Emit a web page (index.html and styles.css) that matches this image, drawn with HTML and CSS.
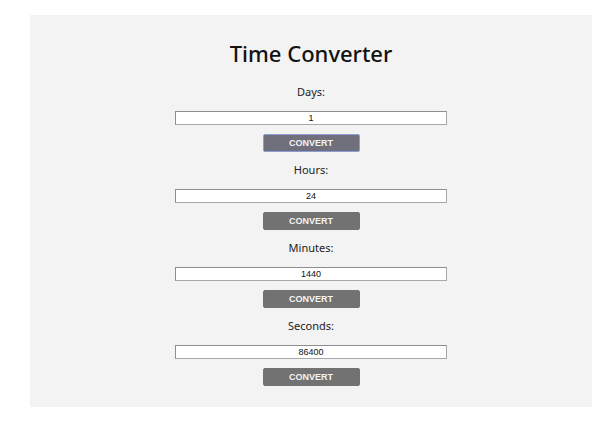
FILE: index.html
```html
<!DOCTYPE html>
<html>
<head>
<meta charset="utf-8">
<link rel="stylesheet" href="styles.css">
</head>
<body>
<main class="panel">
  <h1 class="title">Time Converter</h1>
  <section class="group">
    <label class="label">Days:</label>
    <input class="field" type="text" value="1">
    <button class="btn btn-focus">CONVERT</button>
  </section>
  <section class="group">
    <label class="label">Hours:</label>
    <input class="field" type="text" value="24">
    <button class="btn">CONVERT</button>
  </section>
  <section class="group">
    <label class="label">Minutes:</label>
    <input class="field" type="text" value="1440">
    <button class="btn">CONVERT</button>
  </section>
  <section class="group">
    <label class="label">Seconds:</label>
    <input class="field" type="text" value="86400">
    <button class="btn">CONVERT</button>
  </section>
</main>
</body>
</html>
```
FILE: styles.css
```css
html, body {
  margin: 0;
  padding: 0;
  background: #ffffff;
}
.panel {
  box-sizing: border-box;
  margin: 15px 0 0 30px;
  width: 562px;
  height: 392px;
  background: #f3f3f3;
  padding-top: 23px;
  display: flex;
  flex-direction: column;
  align-items: center;
}
.title {
  margin: 0 0 16px 0;
  font-family: "Noto Sans", sans-serif;
  font-weight: 500;
  font-size: 22px;
  line-height: 30px;
  color: #111;
}
.group {
  display: flex;
  flex-direction: column;
  align-items: center;
  height: 78px;
}
.label {
  font-family: "Noto Sans", sans-serif;
  font-size: 11px;
  line-height: 16px;
  color: #222;
  margin-bottom: 11px;
}
.field {
  box-sizing: border-box;
  width: 272px;
  height: 14px;
  padding: 0;
  margin: 0 0 9px 0;
  border: 1px solid #a8a8a8;
  border-top-color: #8e8e8e;
  border-left-color: #8e8e8e;
  background: #fff;
  text-align: center;
  font-family: "Liberation Sans", Arial, sans-serif;
  font-size: 9px;
  color: #111;
  outline: none;
}
.btn {
  box-sizing: border-box;
  width: 97px;
  height: 18px;
  padding: 0;
  margin: 0;
  border: 1px solid #727272;
  border-radius: 2px;
  background: #727272;
  color: #f4f4f4;
  font-family: "Liberation Sans", Arial, sans-serif;
  font-weight: bold;
  font-size: 9px;
  line-height: 16px;
}
.btn-focus {
  background: #6f707c;
  border-color: #8c9bd4;
}
```
